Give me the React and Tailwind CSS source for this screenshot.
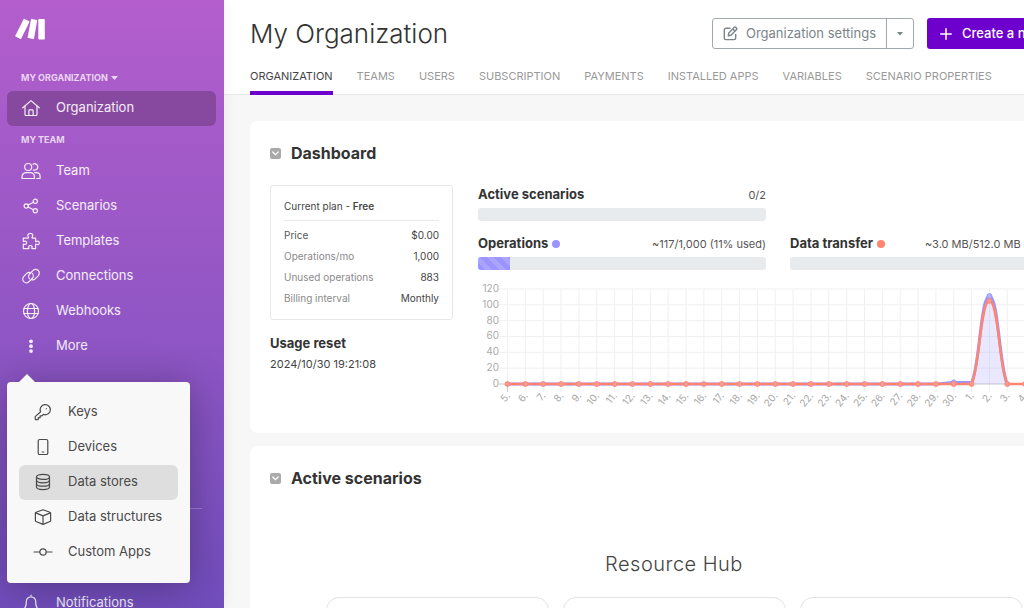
const Icon = ({ children }) => (
  <svg
    viewBox="0 0 20 20"
    width="20"
    height="20"
    fill="none"
    stroke="currentColor"
    strokeWidth="1.2"
    strokeLinecap="round"
    strokeLinejoin="round"
    className="shrink-0"
    aria-hidden="true"
  >
    {children}
  </svg>
);

const icons = {
  home: (
    <>
      <path d="M1.8 9.8 10 2.6l8.2 7.2" />
      <path d="M4 8.2v8.3c0 .6.4 1 1 1h10c.6 0 1-.4 1-1V8.2" />
      <path d="M7.9 17.3v-4.6c0-.5.3-.8.8-.8h2.6c.5 0 .8.3.8.8v4.6" />
    </>
  ),
  team: (
    <>
      <circle cx="7.2" cy="6" r="3.5" />
      <path d="M1 17.5v-1.7c0-2.5 1.9-4.2 4.2-4.2h4c2.3 0 4.2 1.7 4.2 4.2v1.7z" />
      <path d="M12 3.2a3.2 3.2 0 1 1 .4 5.7" />
      <path d="M13.6 11.6h1.6c2.2 0 3.9 1.6 3.9 3.8v2.1h-3.4" />
    </>
  ),
  share: (
    <>
      <circle cx="5.2" cy="10" r="2.1" />
      <circle cx="14.3" cy="5.3" r="2.1" />
      <circle cx="14.3" cy="14.7" r="2.1" />
      <path d="m7.1 9 5.300-2.7M7.1 11l5.3 2.7" />
    </>
  ),
  puzzle: (
    <path d="M2.3 7.2H7c.6 0 .7-.5.4-1C6.1 4.2 7 2.3 9.3 2.3s3.2 1.9 1.9 3.9c-.3.5-.2 1 .4 1h3v3c0 .6.5.7 1 .4 1.3-.8 2.7-.3 2.7 1.3s-1.4 2.2-2.7 1.4c-.5-.3-1-.2-1 .4v3.9h-3.3c-.6 0-.7-.4-.4-.9.6-1 .2-2.2-1.5-2.2s-2.2 1.2-1.5 2.2c.3.5.1.9-.4.9H2.3v-4c0-.5.4-.7.9-.4 1.2.7 2.4.1 2.400-1.4s-1.2-2-2.4-1.400c-.5.3-.9.1-.9-.4z" />
  ),
  link: (
    <>
      <path d="M8.7 12.9a3.7 3.7 0 0 1 .1-5.2l3.1-3.1a3.7 3.7 0 0 1 6.2 1.2c.5 1.4.1 2.9-.9 4l-3 3a3.7 3.7 0 0 1-3.2 1" />
      <path d="M11.3 7.3a3.7 3.7 0 0 1-.1 5.2l-3.1 3.1a3.7 3.7 0 0 1-6.2-1.2c-.5-1.4-.1-2.9.9-4l3-3a3.7 3.7 0 0 1 3.2-1" />
    </>
  ),
  globe: (
    <>
      <circle cx="10" cy="10" r="7.5" />
      <ellipse cx="10" cy="10" rx="3.6" ry="7.5" />
      <path d="M3 7.5h14M3 12.5h14" />
    </>
  ),
  more: (
    <g fill="currentColor" stroke="none">
      <circle cx="10" cy="5.3" r="1.9" />
      <circle cx="10" cy="10.2" r="1.9" />
      <circle cx="10" cy="15.1" r="1.9" />
    </g>
  ),
  bell: (
    <>
      <path d="M10 2v1.6M4 14.5c1-1 1.3-2.6 1.3-5.7A4.7 4.7 0 0 1 10 3.8a4.7 4.7 0 0 1 4.7 5c0 3.1.3 4.7 1.3 5.7.4.6.1 1-.5 1h-11c-.6 0-.9-.4-.5-1z" />
      <path d="M8 17.5c.6 1.2 3.4 1.2 4 0" />
    </>
  ),
  key: (
    <>
      <path d="M7.6 9.8a5.1 5.1 0 1 1 2.7 2.6l-1.400 1.500H7.100v1.800H5.300v1.500l-.6.5H2.8a.6.6 0 0 1-.6-.6v-2.500z" />
      <circle cx="13.300" cy="6.700" r=".6" fill="currentColor" stroke="none" />
    </>
  ),
  device: (
    <>
      <rect x="5.2" y="2.500" width="9.600" height="15" rx="1.6" />
      <path d="M9.2 15h1.6" />
    </>
  ),
  database: (
    <>
      <ellipse cx="10" cy="4.9" rx="6.5" ry="2.5" />
      <path d="M3.5 4.9v10.2c0 1.4 2.9 2.5 6.5 2.5s6.5-1.1 6.5-2.5V4.9" />
      <path d="M3.5 8.3c0 1.4 2.9 2.5 6.5 2.5s6.5-1.1 6.5-2.5M3.5 11.7c0 1.4 2.9 2.5 6.5 2.5s6.5-1.1 6.5-2.5" />
    </>
  ),
  cube: (
    <>
      <path d="m10 2.7 7 2.6c.4.1.6.4.6.8v7.6c0 .4-.2.7-.6.8l-7 2.9-7-2.9a.9.9 0 0 1-.6-.8V6.1c0-.4.2-.7.6-.8z" />
      <path d="m2.7 5.9 7.3 3 7.3-3M10 8.9v8.3" />
    </>
  ),
  commit: (
    <>
      <circle cx="10" cy="10" r="3.2" />
      <path d="M1 10h5.8M13.2 10H19" />
    </>
  ),
};

const teamLinks = [
  { icon: "team", label: "Team" },
  { icon: "share", label: "Scenarios" },
  { icon: "puzzle", label: "Templates" },
  { icon: "link", label: "Connections" },
  { icon: "globe", label: "Webhooks" },
];

const moreLinks = [
  { icon: "key", label: "Keys" },
  { icon: "device", label: "Devices" },
  { icon: "database", label: "Data stores", active: true },
  { icon: "cube", label: "Data structures" },
  { icon: "commit", label: "Custom Apps" },
];

const tabs = [
  "Organization",
  "Teams",
  "Users",
  "Subscription",
  "Payments",
  "Installed apps",
  "Variables",
  "Scenario properties",
];

const NavLink = ({ icon, label, active }) => (
  <a
    href="#"
    className={`flex h-[35px] items-center gap-[15px] rounded-md px-3.5 text-[13px] text-white/90 ${
      active ? "bg-[#87499f]" : ""
    }`}
  >
    <Icon>{icons[icon]}</Icon>
    {label}
  </a>
);

const MoreMenu = () => (
  <div className="absolute top-full left-0 z-20 mt-[18px] w-[183px] rounded-sm bg-[#f8f8f8] px-3 py-[13px] shadow-[0_4px_40px_rgba(0,0,0,0.3)]">
    <svg className="absolute -top-2 left-3" width="16" height="8" viewBox="0 0 16 8" aria-hidden="true">
      <path d="M0 8 8 0l8 8z" fill="#f8f8f8" />
    </svg>
    {moreLinks.map((item) => (
      <a
        key={item.label}
        href="#"
        className={`flex h-[35px] items-center gap-[15px] rounded-md px-3.5 text-[13px] whitespace-nowrap text-[#4a4a4a] ${
          item.active ? "bg-[#dedede]" : ""
        }`}
      >
        <Icon>{icons[item.icon]}</Icon>
        {item.label}
      </a>
    ))}
  </div>
);

const Sidebar = () => (
  <aside className="relative z-10 flex w-56 shrink-0 flex-col bg-linear-to-b from-[#b45ecd] to-[#714dbc] pr-2 pl-[7px] shadow-[0_0_14px_rgba(0,0,0,0.06)]">
    <a href="#" aria-label="Make" className="mt-[18px] ml-2 block w-[31px]">
      <svg width="31" height="22" viewBox="0 0 31 22" fill="#fff">
        <path d="M8.6 1.2c.2-.4.5-.5.9-.3l4.7 2.3c.3.2.4.5.2.9L6.3 20.6c-.2.4-.5.5-.9.3L.6 18.6c-.3-.2-.4-.5-.3-.9z" />
        <path d="M16 1.4c.1-.4.4-.6.7-.5l5 1c.4.1.6.4.5.7l-3.2 18c-.1.4-.4.6-.7.5l-5.2-1c-.4-.1-.6-.4-.5-.7z" />
        <rect x="23.3" y="1" width="6.5" height="20.4" rx=".7" />
      </svg>
    </a>
    <button className="mt-[31px] ml-3.5 flex h-4 items-center gap-[3px] text-[9px] font-bold text-white/75 uppercase">
      My organization
      <svg width="7" height="4" viewBox="0 0 7 4" fill="currentColor" aria-hidden="true">
        <path d="M0 0h7L3.5 4z" />
      </svg>
    </button>
    <nav className="mt-1.5">
      <NavLink icon="home" label="Organization" active />
      <p className="mt-1.5 mb-1.5 ml-3.5 h-4 text-[9px] leading-4 font-bold text-white/75 uppercase">My team</p>
      {teamLinks.map((item) => (
        <NavLink key={item.label} {...item} />
      ))}
      <div className="relative">
        <NavLink icon="more" label="More" />
        <MoreMenu />
      </div>
    </nav>
    <div className="mx-3.5 mt-36 border-t border-white/25 pt-[84px]" />
    <NavLink icon="bell" label="Notifications" />
  </aside>
);

const Header = () => (
  <header className="border-b border-[#e9e9e9] bg-white px-[26px]">
    <div className="flex items-start justify-between pt-[18px]">
      <h1 className="text-[26px] leading-[31px] font-light text-[#333]">My Organization</h1>
      <div className="flex gap-[13px]">
        <div className="flex h-[31px] rounded-[3px] border border-[#a2a9ae] text-[13px] text-[#7b8489]">
          <button className="flex items-center gap-2 border-r border-[#a2a9ae] px-2.5">
            <svg
              width="15"
              height="15"
              viewBox="0 0 15 15"
              fill="none"
              stroke="currentColor"
              strokeWidth="1.4"
              strokeLinejoin="round"
              strokeLinecap="round"
              aria-hidden="true"
            >
              <path d="M7 2.2H3a1.7 1.7 0 0 0-1.7 1.7v8A1.7 1.7 0 0 0 3 13.6h8a1.7 1.7 0 0 0 1.7-1.7V8.5" />
              <path d="M11.3 1.3a.9.9 0 0 1 1.3 0l1 1a.9.9 0 0 1 0 1.3L8 9.2l-2.7.6.5-2.8zM9.8 2.9l2.3 2.3" />
            </svg>
            Organization settings
          </button>
          <button aria-label="More settings" className="flex w-[26px] items-center justify-center">
            <svg width="6" height="4" viewBox="0 0 6 4" fill="currentColor" aria-hidden="true">
              <path d="M0 0h6L3 3.5z" />
            </svg>
          </button>
        </div>
        <button className="flex h-[31px] w-[171px] items-center gap-2.5 rounded-[3px] bg-[#6d00cc] px-[13px] text-[13px] font-medium whitespace-nowrap text-white">
          <svg
            width="12"
            height="12"
            viewBox="0 0 12 12"
            stroke="currentColor"
            strokeWidth="1.5"
            strokeLinecap="round"
            className="shrink-0"
            aria-hidden="true"
          >
            <path d="M6 .8v10.4M.8 6h10.4" />
          </svg>
          Create a new scenario
        </button>
      </div>
    </div>
    <nav className="-mb-px flex gap-6 pt-[18px] whitespace-nowrap">
      {tabs.map((tab, i) => (
        <a
          key={tab}
          href="#"
          className={`border-b-4 pb-[5px] text-[11px] leading-[19px] uppercase ${
            i === 0 ? "border-[#6d00cc] text-[#444]" : "border-transparent text-[#999]"
          }`}
        >
          {tab}
        </a>
      ))}
    </nav>
  </header>
);

const CardHeading = ({ children }) => (
  <div className="flex h-6 items-center gap-2.5">
    <button aria-label="Collapse" className="flex size-[11px] items-center justify-center rounded-xs bg-[#aaa]">
      <svg
        width="7"
        height="5"
        viewBox="0 0 7 5"
        fill="none"
        stroke="#fff"
        strokeWidth="1.3"
        strokeLinecap="round"
        aria-hidden="true"
      >
        <path d="m.8 1 2.7 2.6L6.2 1" />
      </svg>
    </button>
    <h2 className="text-base font-bold text-[#333]">{children}</h2>
  </div>
);

const Meter = ({ title, value, percent, dot }) => (
  <div>
    <div className="flex h-5 items-center justify-between whitespace-nowrap">
      <h3 className="flex items-center gap-1 text-[13px] font-bold text-[#333]">
        {title}
        {dot && <span className={`size-2 rounded-full ${dot}`} />}
      </h3>
      <span className="text-[11px] text-[#555]">{value}</span>
    </div>
    <div
      role="progressbar"
      aria-label={title}
      aria-valuenow={percent}
      className="mt-[3px] h-[13px] overflow-hidden rounded-[3px] bg-[#e8ebee]"
    >
      <div
        className="h-full bg-[#9b94ff] bg-[repeating-linear-gradient(45deg,transparent_0_5px,rgba(255,255,255,0.15)_5px_10px)]"
        style={{ width: `${percent}%` }}
      />
    </div>
  </div>
);

const days = [...Array.from({ length: 26 }, (_, i) => i + 5), 1, 2, 3, 4, 5, 6, 7];
const STEP = 17.85;
const LEFT = 29.5;
const BASE = 114;
const px = (i) => LEFT + i * STEP;
const py = (v) => BASE - v * 0.792;

const spike = (peak) =>
  `C${px(26) + 8} ${BASE - 16} ${px(27) - 9} ${py(peak)} ${px(27)} ${py(peak)} S${px(28) - 8} ${BASE - 16} ${px(28)} ${BASE}`;
const operations = `M${px(0)} ${BASE}H${px(24)}C${px(24) + 8} ${BASE} ${px(25) - 8} ${py(2)} ${px(25)} ${py(2)}L${px(26)} ${py(2)}${spike(111)}`;
const transfer = `M${px(0)} ${BASE}H${px(26)}${spike(105)}H${px(32)}`;

const UsageChart = () => (
  <svg viewBox="0 0 600 143" className="w-full" role="img" aria-label="Daily usage">
    <g stroke="#f0f0f0">
      {[120, 100, 80, 60, 40, 20].map((v) => (
        <path key={v} d={`M21 ${py(v)}H600`} />
      ))}
      {days.map((d, i) => (
        <path key={i} d={`M${px(i)} ${py(120)}V122`} />
      ))}
    </g>
    <path d={`M21 ${BASE}H600M${px(0)} ${BASE}V122`} stroke="#c8c8c8" />
    <g fill="#aaa" fontSize="10" textAnchor="end">
      {[120, 100, 80, 60, 40, 20, 0].map((v) => (
        <text key={v} x="21" y={py(v) + 3}>
          {v}
        </text>
      ))}
      {days.map((d, i) => (
        <text key={i} transform={`translate(${px(i) + 3} 126) rotate(-50)`}>
          {d}.
        </text>
      ))}
    </g>
    <path d={operations} fill="#9b94ff" fillOpacity="0.22" stroke="none" />
    <path d={operations} fill="none" stroke="#9b94ff" strokeWidth="3" />
    <circle cx={px(27)} cy={py(111)} r="2.5" fill="#b5b0ff" stroke="#9b94ff" />
    <circle cx={px(25)} cy={py(2)} r="2.5" fill="#b5b0ff" stroke="#9b94ff" />
    <path d={transfer} fill="none" stroke="#ff8570" strokeWidth="2.5" />
    {days.map((d, i) => (
      <circle
        key={i}
        cx={px(i)}
        cy={i === 27 ? py(105) : BASE}
        r="2.5"
        fill="#f79a8b"
        stroke="#f5857a"
        strokeOpacity="0.8"
      />
    ))}
  </svg>
);

const plan = [
  ["Price", "$0.00"],
  ["Operations/mo", "1,000"],
  ["Unused operations", "883"],
  ["Billing interval", "Monthly"],
];

const Dashboard = () => (
  <section className="rounded-lg bg-white p-5">
    <CardHeading>Dashboard</CardHeading>
    <div className="mt-5 flex gap-[25px]">
      <div className="w-[183px] shrink-0">
        <div className="rounded-[3px] border border-[#e8e8e8] px-[13px] pt-3 pb-2.5">
          <p className="border-b border-[#e8e8e8] pb-1.5 text-[10px] leading-4 text-[#444]">
            Current plan - <b className="font-semibold">Free</b>
          </p>
          <dl className="mt-1 text-[10px] leading-[21px]">
            {plan.map(([name, value], i) => (
              <div key={name} className="flex justify-between">
                <dt className={i === 0 ? "text-[#555]" : "text-[#8a8a8a]"}>{name}</dt>
                <dd className="text-[#444]">{value}</dd>
              </div>
            ))}
          </dl>
        </div>
        <h3 className="mt-3 text-[13px] leading-[22px] font-bold text-[#333]">Usage reset</h3>
        <p className="text-[11px] leading-5 text-[#444]">2024/10/30 19:21:08</p>
      </div>
      <div className="min-w-0 flex-1">
        <div className="grid grid-cols-2 gap-x-6 gap-y-[13px]">
          <div className="col-span-2 grid grid-cols-2 gap-x-6">
            <Meter title="Active scenarios" value="0/2" percent={0} />
          </div>
          <Meter title="Operations" value="~117/1,000 (11% used)" percent={11} dot="bg-[#9b94ff]" />
          <Meter title="Data transfer" value="~3.0 MB/512.0 MB (0% used)" percent={0} dot="bg-[#ff8570]" />
        </div>
        <UsageChart />
      </div>
    </div>
  </section>
);

const ActiveScenarios = () => (
  <section className="mt-[13px] rounded-lg bg-white p-5">
    <CardHeading>Active scenarios</CardHeading>
    <h2 className="mt-[60px] text-center text-xl leading-7 font-light tracking-wide text-[#444]">Resource Hub</h2>
    <div className="mx-auto mt-[19px] grid max-w-[697px] grid-cols-3 gap-3.5">
      {[1, 2, 3].map((n) => (
        <div key={n} className="h-40 rounded-[13px] border border-[#e3e3e3]" />
      ))}
    </div>
  </section>
);

export default function App() {
  return (
    <div className="flex h-screen overflow-hidden bg-[#f7f7f7] font-['Inter',sans-serif]">
      <Sidebar />
      <div className="min-w-[900px] flex-1">
        <Header />
        <main className="px-[26px] pt-[26px]">
          <Dashboard />
          <ActiveScenarios />
        </main>
      </div>
    </div>
  );
}
